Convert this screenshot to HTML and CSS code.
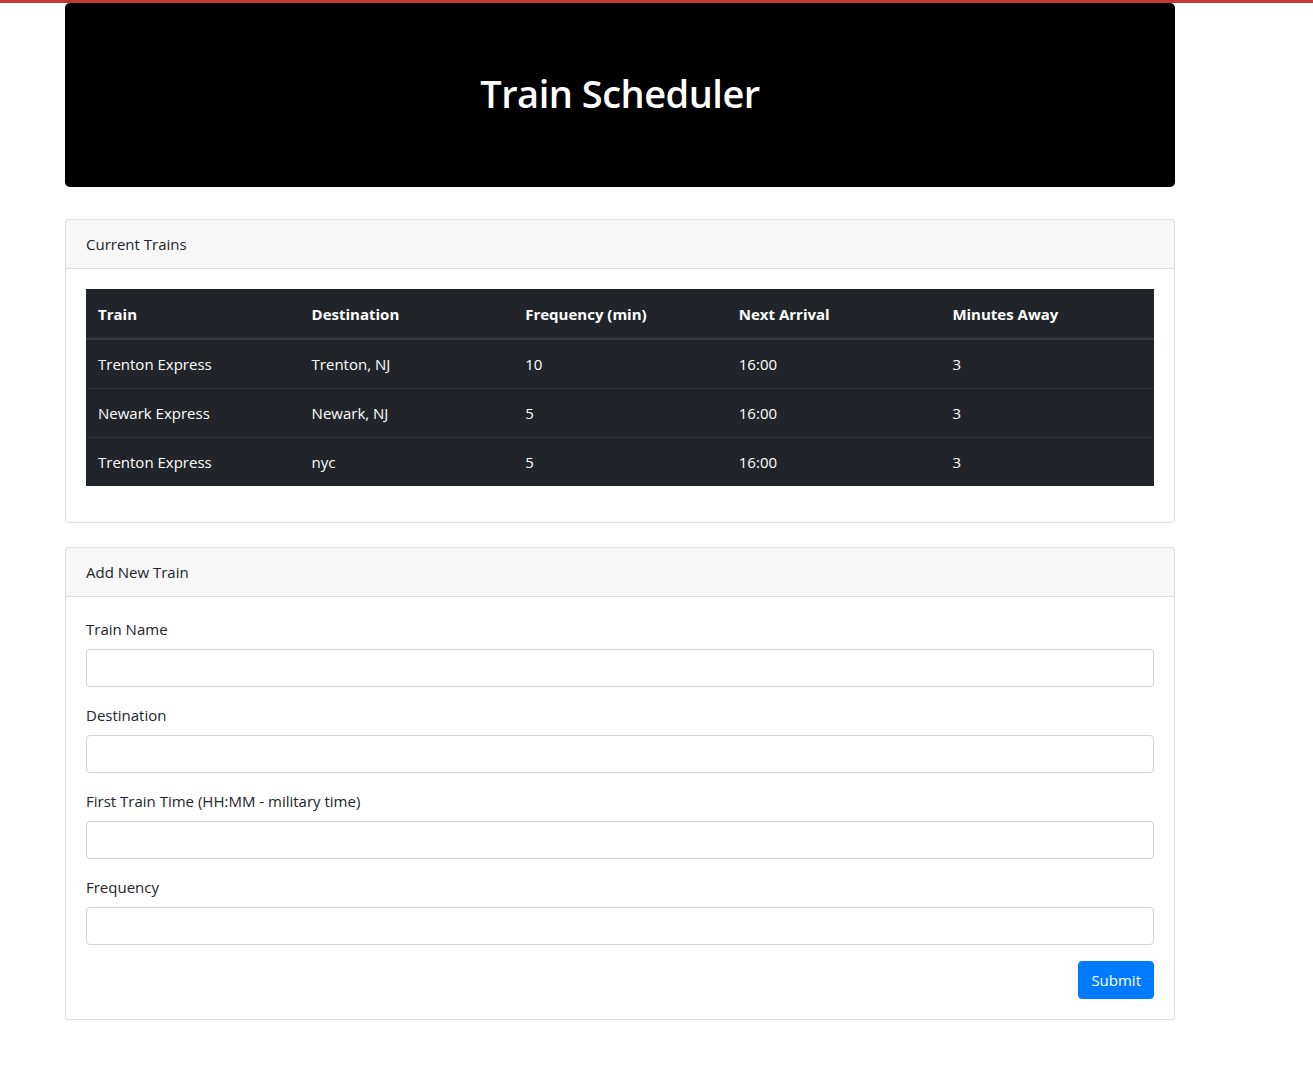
FILE: index.html
```html
<!DOCTYPE html>
<html lang="en">
<head>
<meta charset="utf-8">
<title>Train Scheduler</title>
<link rel="stylesheet" href="styles.css">
</head>
<body>
<div class="container">
  <div class="jumbotron">
    <h1 class="title">Train Scheduler</h1>
  </div>

  <div class="card">
    <div class="card-header">Current Trains</div>
    <div class="card-body">
      <table class="table">
        <thead>
          <tr>
            <th>Train</th>
            <th>Destination</th>
            <th>Frequency (min)</th>
            <th>Next Arrival</th>
            <th>Minutes Away</th>
          </tr>
        </thead>
        <tbody>
          <tr><td>Trenton Express</td><td>Trenton, NJ</td><td>10</td><td>16:00</td><td>3</td></tr>
          <tr><td>Newark Express</td><td>Newark, NJ</td><td>5</td><td>16:00</td><td>3</td></tr>
          <tr><td>Trenton Express</td><td>nyc</td><td>5</td><td>16:00</td><td>3</td></tr>
        </tbody>
      </table>
    </div>
  </div>

  <div class="card card-form">
    <div class="card-header">Add New Train</div>
    <div class="card-body">
      <form class="form">
        <div class="form-group">
          <label class="label" for="train-name">Train Name</label>
          <input class="form-control" id="train-name" type="text">
        </div>
        <div class="form-group">
          <label class="label" for="destination">Destination</label>
          <input class="form-control" id="destination" type="text">
        </div>
        <div class="form-group">
          <label class="label" for="first-time">First Train Time (HH:MM - military time)</label>
          <input class="form-control" id="first-time" type="text">
        </div>
        <div class="form-group">
          <label class="label" for="frequency">Frequency</label>
          <input class="form-control" id="frequency" type="text">
        </div>
        <div class="actions">
          <button class="btn" type="submit">Submit</button>
        </div>
      </form>
    </div>
  </div>
</div>
</body>
</html>
```

FILE: styles.css
```css
* { box-sizing: border-box; }

html, body {
  margin: 0;
  padding: 0;
}

body {
  border-top: 3px solid #c23b2e;
  background: #fff;
  color: #212529;
  font-family: "Open Sans", "Noto Sans", "Liberation Sans", sans-serif;
  font-size: 16px;
  line-height: 24px;
}

.container {
  width: 1110px;
  margin-left: 65px;
}

.jumbotron {
  background: #000;
  border-radius: 4.8px;
  height: 184px;
  display: flex;
  align-items: center;
  justify-content: center;
  margin-bottom: 32px;
}

.title {
  margin: 0 0 5px;
  color: #fff;
  font-size: 38px;
  font-weight: 600;
  letter-spacing: -0.5px;
  line-height: 48px;
}

.card {
  border: 1px solid rgba(0, 0, 0, .125);
  border-radius: 4px;
  background: #fff;
}

.card-form {
  margin-top: 24px;
}

.card-header {
  padding: 12px 20px;
  background: rgba(0, 0, 0, .03);
  border-bottom: 1px solid rgba(0, 0, 0, .125);
  font-size: 15px;
}

.card-body {
  padding: 20px;
}

.table {
  width: 100%;
  border-collapse: separate;
  border-spacing: 0;
  table-layout: fixed;
  background: #212529;
  color: #fff;
  margin-bottom: 16px;
}

.table th,
.table td {
  padding: 12px;
  text-align: left;
  vertical-align: top;
  font-size: 15px;
}

.table td {
  border-top: 1px solid #32383e;
}

.table thead th {
  padding-top: 13px;
  border-bottom: 1px solid #3a4047;
  font-weight: 700;
}

.form-group {
  margin-bottom: 16px;
}

.label {
  display: block;
  margin-bottom: 8px;
  font-size: 15px;
}

.form-control {
  display: block;
  width: 100%;
  height: 38px;
  padding: 6px 12px;
  font: inherit;
  color: #495057;
  background: #fff;
  border: 1px solid #ced4da;
  border-radius: 4px;
}

.actions {
  display: flex;
  justify-content: flex-end;
}

.btn {
  height: 38px;
  padding: 6px 12px;
  font: inherit;
  font-size: 15px;
  color: #fff;
  background: #007bff;
  border: 1px solid #007bff;
  border-radius: 4px;
}
```
